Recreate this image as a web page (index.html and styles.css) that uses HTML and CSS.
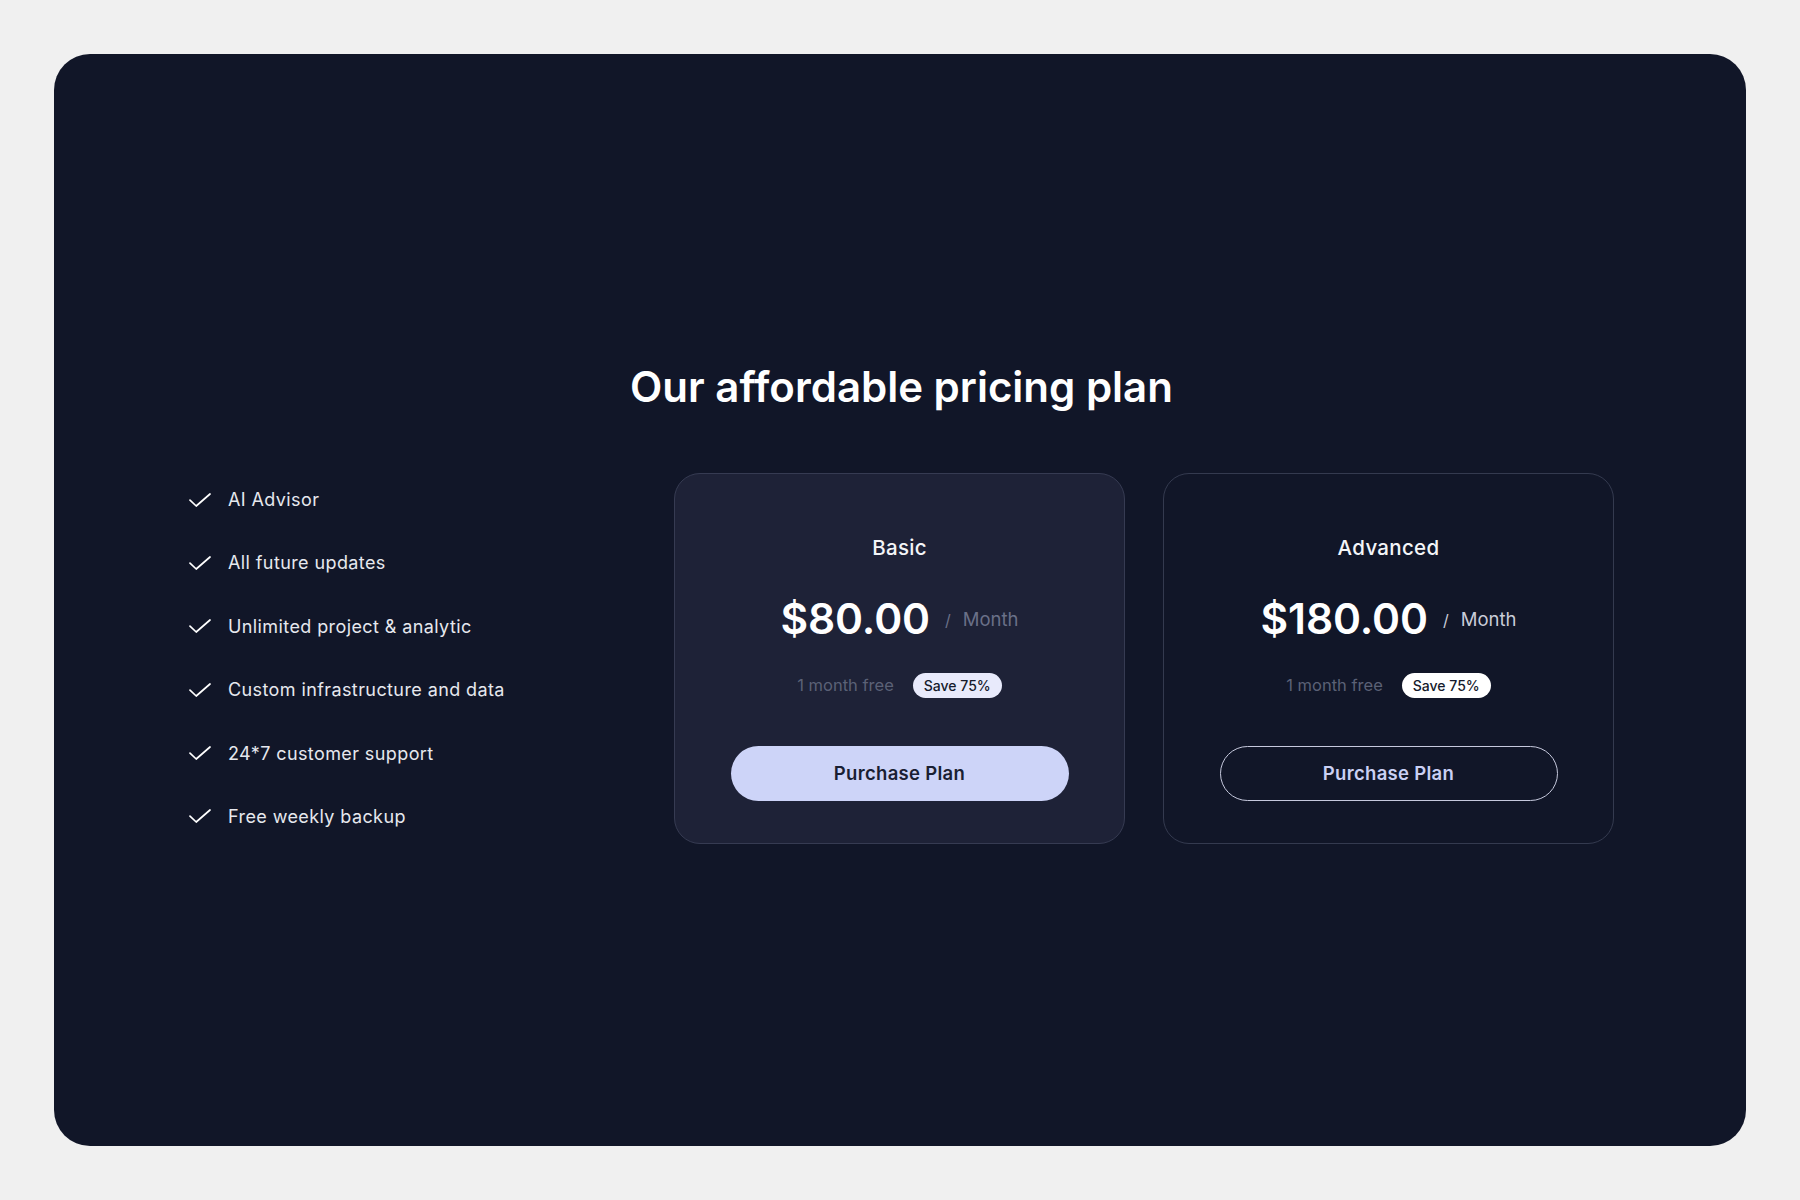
FILE: index.html
```html
<!DOCTYPE html>
<html lang="en">
<head>
<meta charset="utf-8">
<title>Pricing</title>
<link rel="stylesheet" href="styles.css">
</head>
<body>
<main class="frame">
  <h1 class="title">Our affordable pricing plan</h1>
  <div class="grid">
    <ul class="features">
      <li><svg class="check" viewBox="0 0 22 14" aria-hidden="true"><path d="M1 7.2 L7.2 13 L21 1"/></svg><span>AI Advisor</span></li>
      <li><svg class="check" viewBox="0 0 22 14" aria-hidden="true"><path d="M1 7.2 L7.2 13 L21 1"/></svg><span>All future updates</span></li>
      <li><svg class="check" viewBox="0 0 22 14" aria-hidden="true"><path d="M1 7.2 L7.2 13 L21 1"/></svg><span>Unlimited project &amp; analytic</span></li>
      <li><svg class="check" viewBox="0 0 22 14" aria-hidden="true"><path d="M1 7.2 L7.2 13 L21 1"/></svg><span>Custom infrastructure and data</span></li>
      <li><svg class="check" viewBox="0 0 22 14" aria-hidden="true"><path d="M1 7.2 L7.2 13 L21 1"/></svg><span>24*7 customer support</span></li>
      <li><svg class="check" viewBox="0 0 22 14" aria-hidden="true"><path d="M1 7.2 L7.2 13 L21 1"/></svg><span>Free weekly backup</span></li>
    </ul>

    <section class="card card-basic">
      <h2 class="plan">Basic</h2>
      <div class="price-row">
        <span class="price">$80.00</span>
        <span class="per"><span class="slash">/</span>Month</span>
      </div>
      <div class="offer">
        <span class="free">1 month free</span>
        <span class="badge">Save 75%</span>
      </div>
      <button class="btn btn-solid">Purchase Plan</button>
    </section>

    <section class="card card-advanced">
      <h2 class="plan">Advanced</h2>
      <div class="price-row">
        <span class="price">$180.00</span>
        <span class="per"><span class="slash">/</span>Month</span>
      </div>
      <div class="offer">
        <span class="free">1 month free</span>
        <span class="badge">Save 75%</span>
      </div>
      <button class="btn btn-outline">Purchase Plan</button>
    </section>
  </div>
</main>
</body>
</html>
```

FILE: styles.css
```css
* { box-sizing: border-box; }

html, body {
  margin: 0;
  padding: 0;
}

body {
  background: #f0f0f0;
  font-family: Inter, "Noto Sans", "Liberation Sans", sans-serif;
  padding: 54px;
  width: 1800px;
  height: 1200px;
}

.frame {
  height: 1092px;
  background: #111628;
  border-radius: 36px;
  display: flex;
  flex-direction: column;
  justify-content: center;
  padding: 0 132px 0 135px;
}

.title {
  margin: 6px 0 62px;
  text-align: center;
  color: #ffffff;
  font-size: 42px;
  line-height: 48px;
  font-weight: 600;
  letter-spacing: 0;
}

.grid {
  display: grid;
  grid-template-columns: 1fr 451px 451px;
  column-gap: 38px;
  align-items: center;
}

.features {
  list-style: none;
  margin: 0;
  padding: 0;
  display: flex;
  flex-direction: column;
  gap: 39.4px;
}

.features li {
  display: flex;
  align-items: center;
  gap: 17px;
  height: 24px;
  color: #e6e8ee;
  font-size: 18px;
  letter-spacing: 0.4px;
}

.check {
  width: 22px;
  height: 14px;
  flex: none;
  fill: none;
  stroke: #ffffff;
  stroke-width: 1.7;
  stroke-linecap: round;
  stroke-linejoin: round;
}

.card {
  height: 371px;
  border-radius: 26px;
  border: 1px solid #363b52;
  padding: 60px 56px 0;
  display: flex;
  flex-direction: column;
  align-items: center;
}

.card-basic {
  background: #1e2237;
}

.card-advanced {
  background: transparent;
  border-color: #343a4f;
}

.plan {
  margin: 0;
  color: #f4f5f8;
  font-size: 20.5px;
  line-height: 28px;
  font-weight: 500;
  letter-spacing: 0.3px;
}

.price-row {
  margin-top: 30px;
  display: flex;
  align-items: center;
  height: 54px;
}

.price {
  color: #ffffff;
  font-size: 42.5px;
  line-height: 54px;
  font-weight: 600;
  letter-spacing: -0.1px;
}

.per {
  margin-left: 15px;
  font-size: 18.5px;
  color: #6a7088;
}

.slash {
  font-size: 16px;
  margin-right: 12px;
}

.card-advanced .per {
  color: #c9ccd8;
}

.offer {
  margin-top: 27px;
  display: flex;
  align-items: center;
  gap: 19px;
  height: 25px;
}

.free {
  color: #5b6176;
  font-size: 16.5px;
}

.badge {
  height: 25px;
  padding: 0 11px;
  border-radius: 13px;
  background: #e8eafb;
  color: #151a2c;
  font-size: 14px;
  font-weight: 500;
  display: flex;
  align-items: center;
}

.card-advanced .badge {
  background: #ffffff;
}

.btn {
  margin-top: 48px;
  width: 338px;
  height: 55px;
  border-radius: 28px;
  font-family: inherit;
  font-size: 18.5px;
  font-weight: 600;
  letter-spacing: 0.3px;
  cursor: pointer;
}

.btn-solid {
  background: #cdd4f8;
  border: none;
  color: #1a1f33;
}

.btn-outline {
  background: transparent;
  border: 1px solid #c6c9dd;
  color: #cad0f4;
}
```
